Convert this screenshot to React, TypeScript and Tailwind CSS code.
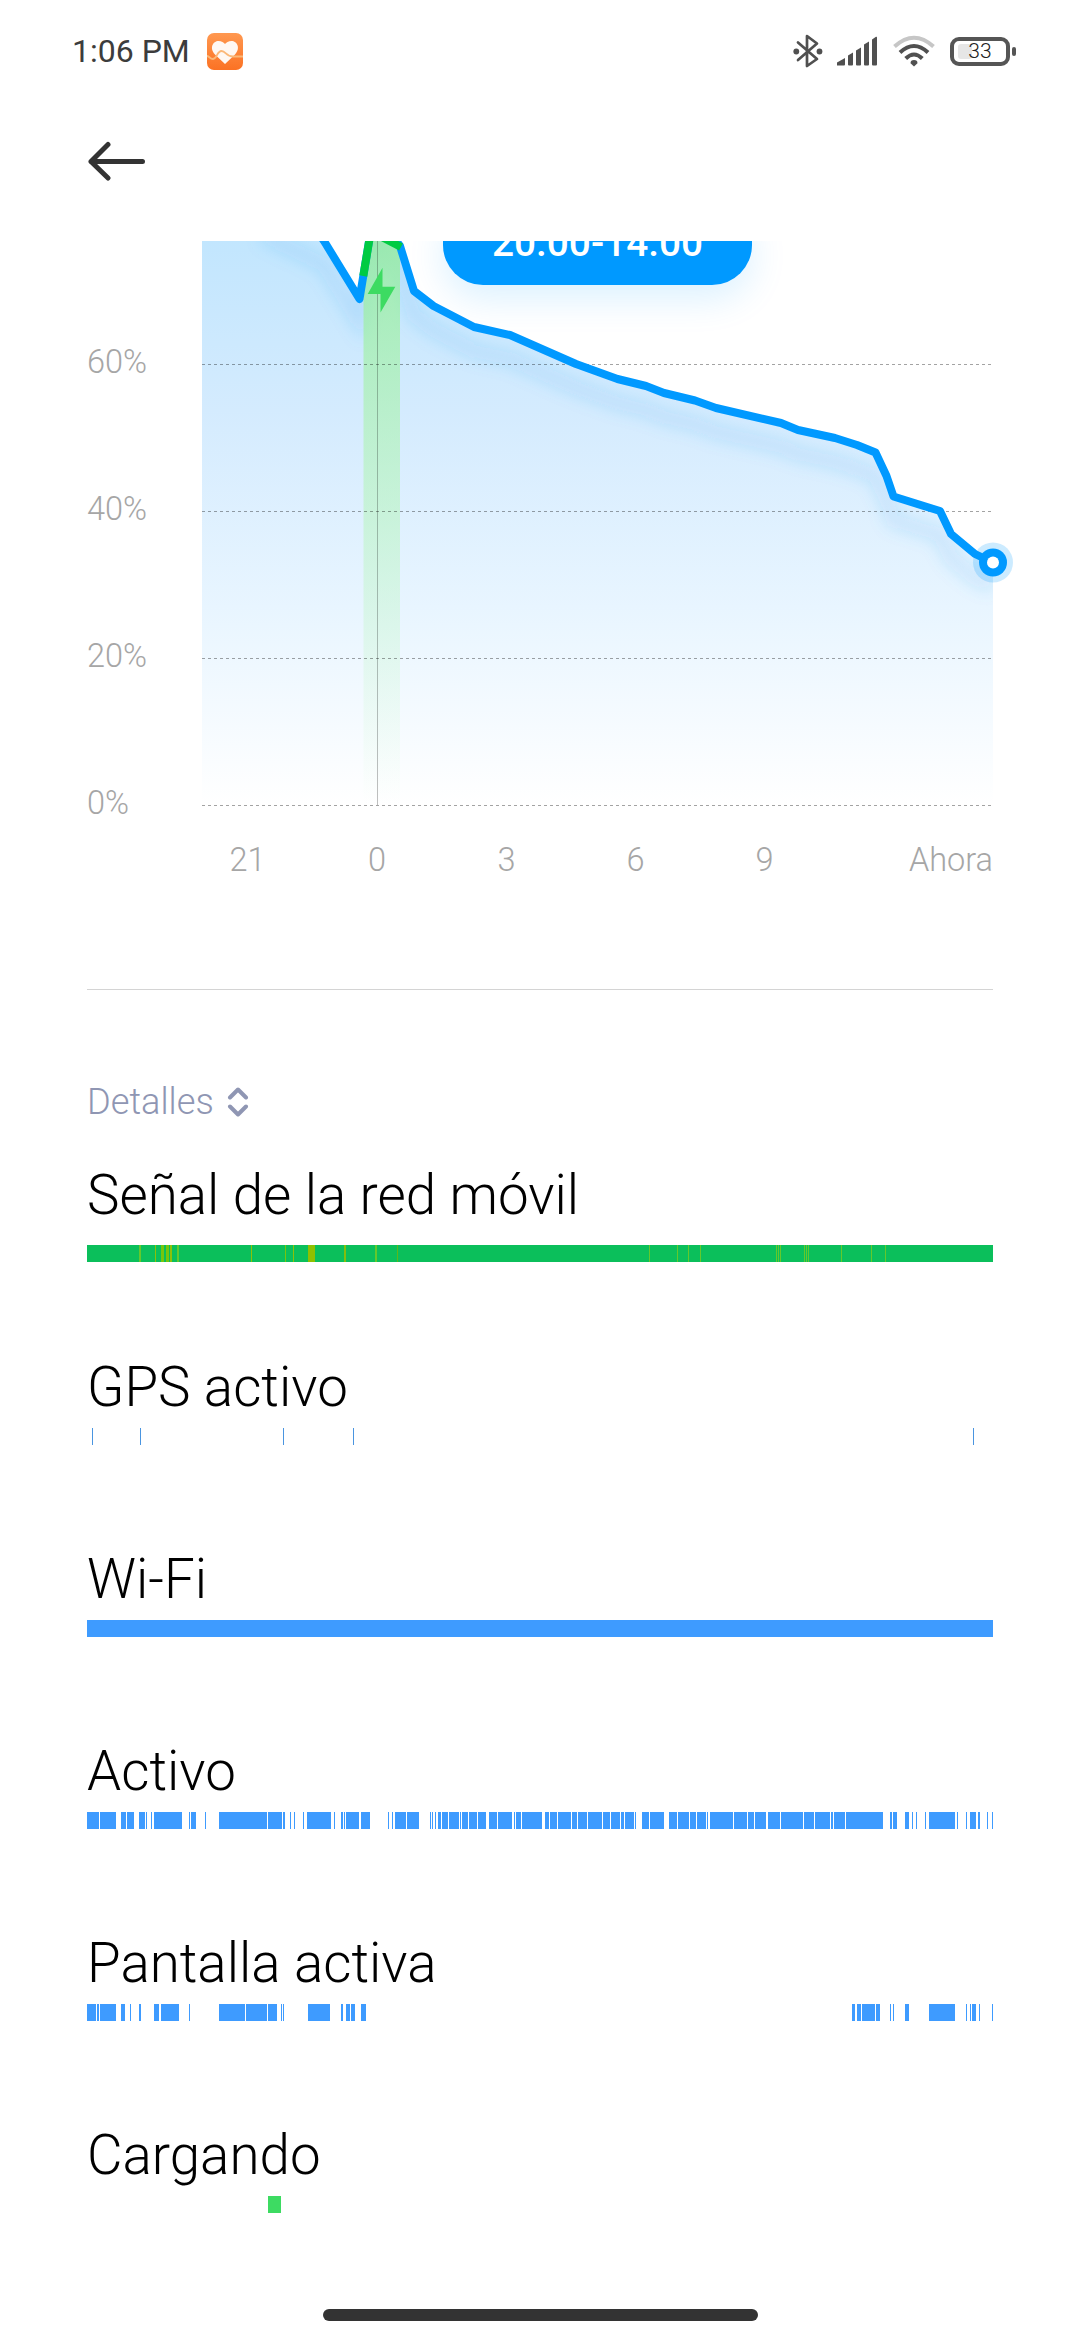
type Segment = [number, number, string?];

const BLUE = "#3e9bff";
const LIME = "#63c92c";
const OLIVE = "#8dc108";

const SIGNAL: Segment[] = [
  [52, 54, LIME], [68, 69, OLIVE], [74, 77, "#78c60d"], [79, 82, "#78c60d"], [83, 85, OLIVE],
  [90, 92, LIME], [164, 165, OLIVE], [198, 199, "#78c60d"], [206, 207, OLIVE], [221, 228, "#8fc000"],
  [257, 259, "#82be0c"], [288, 290, LIME], [310, 311, "#5cb81a"], [562, 563], [590, 591],
  [601, 602], [613, 614], [689, 690], [691, 692], [693, 694], [717, 718], [719, 720], [721, 722],
  [754, 755], [784, 785], [798, 799],
];

const GPS: Segment[] = [[5, 6], [53, 54], [196, 197], [266, 267], [886, 887]];

const ACTIVE: Segment[] = [
  [0, 12], [13, 29], [34, 39], [40, 47], [52, 58], [59, 60], [64, 65], [67, 95], [102, 103],
  [104, 109], [118, 119], [132, 180], [181, 195], [196, 198], [203, 204], [207, 208], [216, 217],
  [220, 244], [247, 248], [254, 256], [257, 258], [259, 272], [274, 283], [301, 302], [305, 306],
  [308, 319], [320, 332], [343, 344], [345, 346], [348, 349], [351, 354], [355, 361], [362, 372],
  [373, 374], [375, 381], [382, 390], [391, 399], [402, 410], [411, 425], [427, 428], [429, 434],
  [435, 455], [458, 462], [463, 470], [471, 484], [485, 490], [491, 500], [501, 515], [516, 523],
  [524, 533], [534, 537], [538, 547], [548, 549], [555, 562], [563, 577], [582, 590], [591, 602],
  [603, 609], [610, 619], [620, 621], [623, 646], [647, 660], [661, 667], [668, 679], [681, 693],
  [694, 716], [717, 727], [728, 743], [744, 746], [747, 758], [759, 796], [803, 805], [806, 810],
  [818, 822], [825, 826], [829, 830], [838, 839], [842, 868], [870, 871], [879, 880], [883, 889],
  [891, 893], [900, 901], [905, 906],
];

const SCREEN: Segment[] = [
  [0, 9], [10, 12], [13, 29], [34, 38], [43, 44], [52, 54], [67, 72], [74, 92], [102, 103],
  [132, 158], [159, 180], [181, 190], [194, 195], [196, 197], [221, 243], [254, 256], [259, 263],
  [264, 268], [274, 279], [765, 768], [770, 774], [775, 788], [789, 793], [803, 804], [806, 807],
  [818, 822], [842, 868], [879, 880], [883, 884], [885, 889], [892, 893], [905, 906],
];

const ROWS = [
  { title: "GPS activo", segments: GPS, color: "#4a95e0" },
  { title: "Wi-Fi", segments: [[0, 906]] as Segment[], color: BLUE },
  { title: "Activo", segments: ACTIVE, color: BLUE },
  { title: "Pantalla activa", segments: SCREEN, color: BLUE },
  { title: "Cargando", segments: [[181, 194]] as Segment[], color: "#3ddb62" },
];

// battery curve, in chart coordinates (0,0 = top left of the visible plot)
const CURVE =
  "L157.5 58 L172 -30 L198 5 L212 50 L231.5 65 L272 86 L308 94 L374 123 L415.5 138 L444 145 L462 152 L493 159.5 L514 167 L579 182 L596 189 L633 197 L655 204 L673.5 211.5 L684.5 235 L691.5 255.5 L738 270 L749 293 L773 313 L791 321.5";

function Track({ segments, color, base }: { segments: Segment[]; color: string; base?: string }) {
  return (
    <svg width="906" height="17" viewBox="0 0 906 17" shapeRendering="crispEdges" className="block">
      {base && <rect width="906" height="17" fill={base} />}
      {segments.map(([from, to, fill]) => (
        <rect key={from} x={from} width={to - from} height="17" fill={fill ?? color} />
      ))}
    </svg>
  );
}

function StatusBar() {
  return (
    <header className="flex h-[102px] shrink-0 items-center justify-between pl-[72px] pr-[64px]">
      <div className="flex items-center">
        <span className="w-[135px] whitespace-nowrap text-[32px] leading-[38px] text-[#3c3c3c]">1:06 PM</span>
        <svg width="36" height="37" viewBox="0 0 36 37" className="block">
          <defs>
            <linearGradient id="app" x1="0" y1="0" x2="0" y2="1">
              <stop offset="0" stopColor="#ff9850" />
              <stop offset="1" stopColor="#fb7224" />
            </linearGradient>
          </defs>
          <rect width="36" height="37" rx="7" fill="url(#app)" />
          <path d="M18 31 L8 21.5 C2 15 6 8 11.5 8 C14.5 8 17 9.5 18 11 C19 9.5 21.5 8 24.5 8 C30 8 34 15 28 21.5 Z" fill="#fff8f3" />
          <path d="M0 23 C2 23 3 26 6 26 C10 26 10 18 14.5 18 C19 18 19 23.5 26 23.5 H36" fill="none" stroke="#fbb878" strokeWidth="1.8" />
        </svg>
      </div>
      <div className="flex items-center">
        <svg width="30" height="34" viewBox="0 0 30 34" className="mr-[14px] block">
          <path d="M5 8.5 L24 25 L14 32 V2 L24 9.5 L5 26" fill="none" stroke="#505050" strokeWidth="2.7" strokeLinejoin="round" strokeLinecap="round" />
          <circle cx="3.3" cy="17.5" r="2.9" fill="#505050" />
          <circle cx="26.5" cy="17.5" r="2.9" fill="#505050" />
        </svg>
        <svg width="40" height="30" viewBox="0 0 40 30" className="mr-[16px] block" fill="#505050">
          <path d="M0 29.5 V26.5 L8 22 V28.5 Q8 29.5 7 29.5Z" />
          <path d="M11 19.5 L16 16.5 V28.5 Q16 29.5 15 29.5 H12 Q11 29.5 11 28.5Z" />
          <path d="M19 14.5 L24 11.5 V28.5 Q24 29.5 23 29.5 H20 Q19 29.5 19 28.5Z" />
          <path d="M27 8.5 L32 5.5 V28.5 Q32 29.5 31 29.5 H28 Q27 29.5 27 28.5Z" />
          <path d="M35 3.5 L39 .8 Q40 .5 40 1.5 V28.5 Q40 29.5 39 29.5 H36 Q35 29.5 35 28.5Z" />
        </svg>
        <svg width="42" height="32" viewBox="0 0 42 32" className="mr-[15px] block" fill="none" strokeWidth="4">
          <path d="M1.5 11.5 Q21 -6 40.5 11.5" stroke="#c6c6c6" />
          <path d="M7 17.5 Q21 4.5 35 17.5" stroke="#505050" />
          <path d="M12.7 23.5 Q21 15.5 29.3 23.5" stroke="#505050" />
          <path d="M21 31.5 L17.5 28.3 Q17.5 25 21 25 Q24.5 25 24.5 28.3Z" fill="#505050" />
        </svg>
        <div className="flex items-center">
          <div className="relative flex h-[29px] w-[60px] items-center justify-center rounded-[9px] border-4 border-[#555]">
            <div className="absolute left-1 top-[3px] h-[15px] w-[14px] rounded-[3px] bg-[#e6e6e6]" />
            <span className="relative pt-px text-[21px] font-light leading-none text-[#222]">33</span>
          </div>
          <div className="ml-[2px] h-[9px] w-1 rounded-[2px] bg-[#555]" />
        </div>
      </div>
    </header>
  );
}

function Chart() {
  return (
    <section className="flex h-[565px] shrink-0 pl-[87px]">
      <div className="flex w-[115px] flex-col pt-[103px] text-[32.5px] font-light leading-[36px] text-[#a6a6a6]">
        {["60%", "40%", "20%", "0%"].map((label) => (
          <span key={label} className="h-[147px] shrink-0">{label}</span>
        ))}
      </div>
      <div className="relative h-[565px] w-[878px] overflow-hidden">
        <svg width="878" height="566" viewBox="0 0 878 566" className="block">
          <defs>
            <linearGradient id="fill" x1="0" y1="0" x2="0" y2="564" gradientUnits="userSpaceOnUse">
              <stop offset="0" stopColor="#c2e6fe" />
              <stop offset=".3" stopColor="#d4ebfe" />
              <stop offset=".65" stopColor="#e8f5ff" />
              <stop offset="1" stopColor="#ffffff" />
            </linearGradient>
            <linearGradient id="charge" x1="0" y1="0" x2="0" y2="564" gradientUnits="userSpaceOnUse">
              <stop offset="0" stopColor="#90ee90" stopOpacity=".7" />
              <stop offset=".5" stopColor="#b4f5b8" stopOpacity=".5" />
              <stop offset="1" stopColor="#c8f8cc" stopOpacity="0" />
            </linearGradient>
            <clipPath id="area">
              <path d={`M0 -40 H95 L122 0 ${CURVE} V564 H0 Z`} />
            </clipPath>
            <filter id="soft" x="-10%" y="-20%" width="120%" height="140%">
              <feGaussianBlur stdDeviation="8" />
            </filter>
          </defs>
          <g clipPath="url(#area)">
            <rect width="791" height="564" fill="url(#fill)" />
            <path d={`M60 -30 L122 0 ${CURVE}`} transform="translate(0 24)" fill="none" stroke="#2a9be8" strokeOpacity=".15" strokeWidth="14" filter="url(#soft)" />
            <rect x="161.5" width="36.5" height="564" fill="url(#charge)" />
          </g>
          <path d="M175.5 0 V564" stroke="#000" strokeOpacity=".25" />
          {[123.5, 270.5, 417.5, 564.5].map((y) => (
            <path key={y} d={`M0 ${y} H791`} stroke="#000" strokeOpacity=".36" strokeDasharray="3 3" />
          ))}
          <path d={`M95 -40 L122 0 ${CURVE}`} fill="none" stroke="#0099ff" strokeWidth="8" strokeLinejoin="round" />
          <path d="M161.3 35 L167.5 -2" stroke="#00cb42" strokeWidth="8" />
          <path d="M178 -5 L199 6" stroke="#00cb42" strokeWidth="8" />
          <path d="M180.5 26.7 L165.7 53 H178.5 V71.5 L193.3 45.7 H180.5 Z" fill="#3ddb62" />
          <circle cx="791" cy="321.5" r="20" fill="#0099ff" fillOpacity=".2" />
          <circle cx="791" cy="321.5" r="14" fill="#0099ff" />
          <circle cx="791" cy="321.5" r="6" fill="#fff" />
        </svg>
        <div className="absolute left-[241px] top-[-43px] flex h-[87px] w-[309px] items-center justify-center rounded-[40px] bg-[#0099ff] pt-[3px] shadow-[0_14px_36px_rgba(0,153,255,0.14)]">
          <span className="whitespace-nowrap text-[38.8px] font-medium leading-[44px] text-white">20.00-14.00</span>
        </div>
      </div>
    </section>
  );
}

export default function App() {
  return (
    <div className="flex h-[2340px] w-[1080px] flex-col overflow-hidden bg-white font-['Roboto',sans-serif]">
      <StatusBar />
      <nav className="h-[139px] shrink-0 pl-[87px] pt-[39px]">
        <svg width="60" height="40" viewBox="0 0 60 40" fill="none" stroke="#333" strokeWidth="5" strokeLinecap="round" strokeLinejoin="round">
          <path d="M21 3.5 L4 20.5 L21 37 M4 20.5 H55.5" />
        </svg>
      </nav>
      <Chart />
      <div className="flex h-[63px] shrink-0 items-end pl-[202px] text-[32.5px] font-light leading-[36px] text-[#a6a6a6]">
        <div className="flex h-[18px] w-[791px] items-center">
          <span className="w-[91px] text-center">21</span>
          <span className="ml-[19px] w-[130px] text-center">0</span>
          <span className="w-[129px] text-center">3</span>
          <span className="w-[129px] text-center">6</span>
          <span className="w-[129px] text-center">9</span>
          <span className="ml-auto">Ahora</span>
        </div>
      </div>
      <hr className="mx-[87px] mt-[120px] shrink-0 border-t border-[#d4d4d4]" />
      <main className="shrink-0 px-[87px]">
        <div className="mt-[90px] flex h-[44px] items-center text-[#8f96b3]">
          <span className="text-[36.2px] font-light leading-[44px]">Detalles</span>
          <svg width="22" height="30" viewBox="0 0 20 30" className="ml-[13px]" fill="none" stroke="currentColor" strokeWidth="4" strokeLinecap="round" strokeLinejoin="round">
            <path d="M2 10.5 L10 2.5 L18 10.5 M2 19.5 L10 27.5 L18 19.5" />
          </svg>
        </div>
        <section className="mt-[39px] h-[192px]">
          <h2 className="mb-[18px] text-[54.7px] font-light leading-[64px] text-black">Señal de la red móvil</h2>
          <Track segments={SIGNAL} color={LIME} base="#0bbf5b" />
        </section>
        {ROWS.map((row) => (
          <section key={row.title} className="h-[192px] last:h-[90px]">
            <h2 className="mb-[9px] text-[54.7px] font-light leading-[64px] text-black">{row.title}</h2>
            <Track segments={row.segments} color={row.color} />
          </section>
        ))}
      </main>
      <div className="mx-auto mb-[19px] mt-auto h-3 w-[435px] shrink-0 rounded-full bg-[#333]" />
    </div>
  );
}
